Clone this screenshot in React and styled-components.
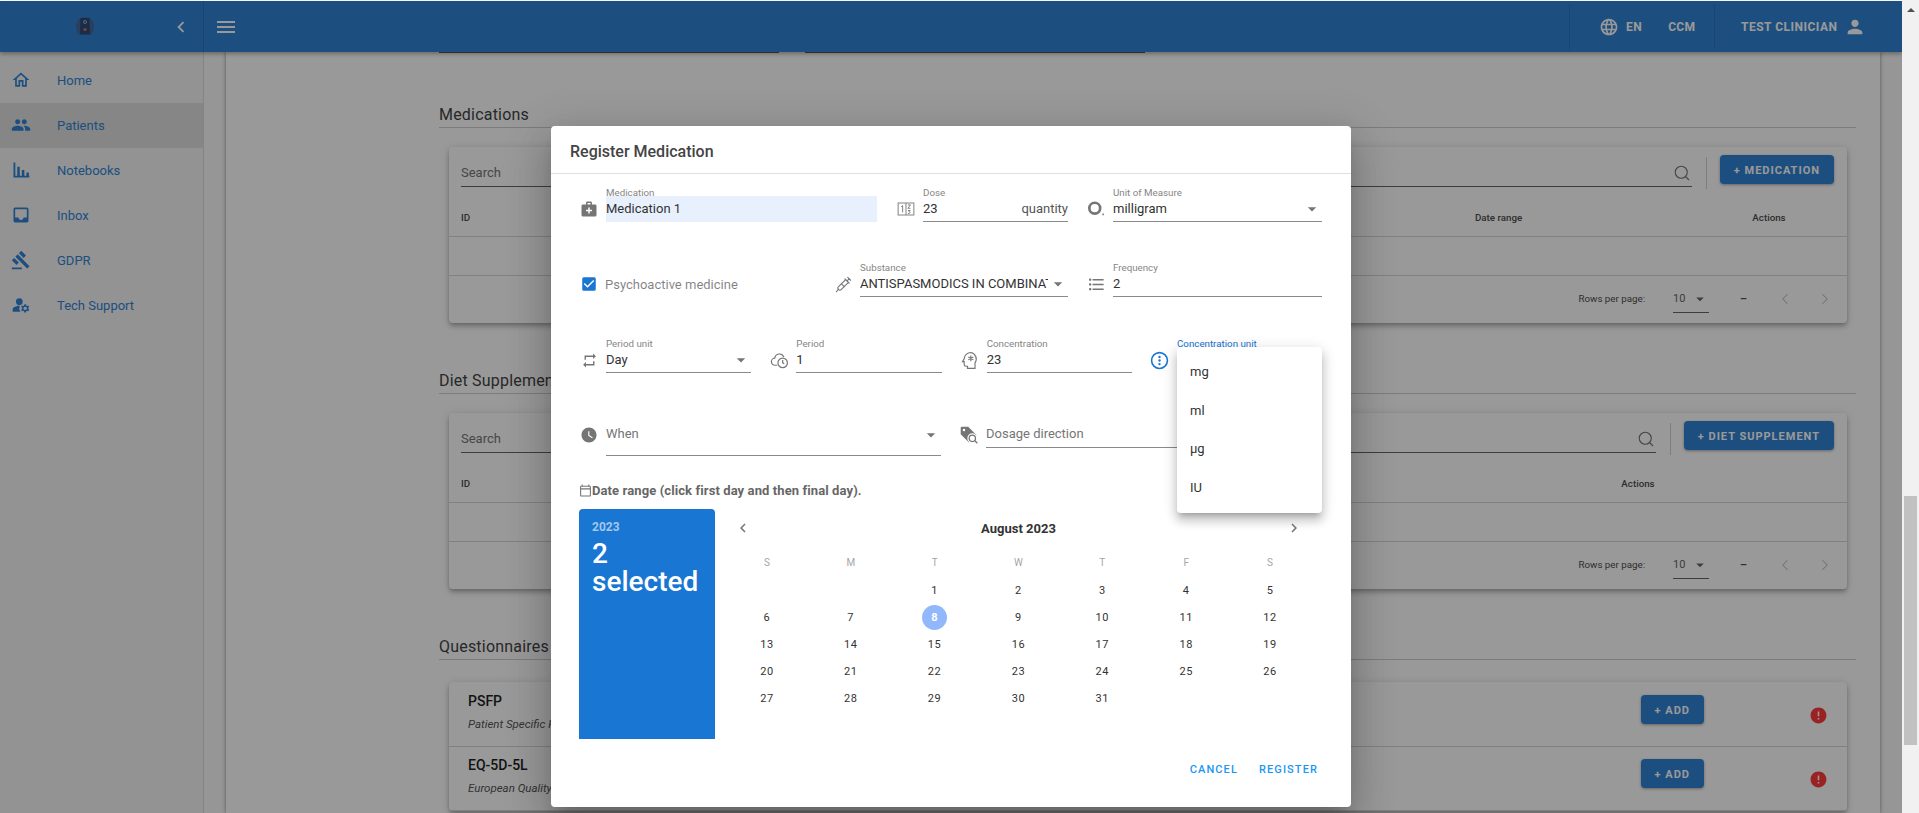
import React from 'react';
import styled, { createGlobalStyle } from 'styled-components';
import {
    MdOutlineHome, MdPeople, MdInbox, MdGavel, MdManageAccounts, MdMenu, MdChevronLeft, MdChevronRight,
    MdLanguage, MdPerson, MdMedicalServices, MdFormatListBulleted, MdRepeat, MdWatchLater,
    MdArrowDropDown, MdOutlineCalendarToday, MdError, MdCheckBox,
} from 'react-icons/md';
import { Search as SearchIcon, Syringe, ChevronLeft, ChevronRight } from 'lucide-react';

const GlobalStyle = createGlobalStyle`
    html, body {
        margin: 0;
        height: 100%;
        overflow: hidden;
        background: #ffffff;
        font-family: Roboto, sans-serif;
    }
`;

const Root = styled.div`
    display: flex;
    width: 1919px;
    height: 813px;
`;

const Stage = styled.div`
    position: relative;
    width: 1902px;
    height: 813px;
    padding-top: 1px;
    box-sizing: border-box;
    overflow: hidden;
    background: #ffffff;
    display: flex;
    flex-direction: column;
`;

const ScrollTrack = styled.div`
    width: 17px;
    background: #f1f1f1;
    display: flex;
    flex-direction: column;
    align-items: center;
`;

const ScrollArrow = styled.div`
    margin-top: 8px;
    border-left: 4px solid transparent;
    border-right: 4px solid transparent;
    border-bottom: 4px solid #505050;
`;

const ScrollThumb = styled.div`
    margin-top: 484px;
    width: 13px;
    height: 249px;
    background: #c1c1c1;
`;

const AppBar = styled.header`
    position: relative;
    z-index: 2;
    flex: none;
    height: 51px;
    display: flex;
    align-items: center;
    background: #3084d6;
    color: #ffffff;
    box-shadow: 0 2px 4px rgba(0, 0, 0, 0.3);
`;

const Brand = styled.div`
    width: 204px;
    height: 51px;
    box-sizing: border-box;
    border-right: 1px solid rgba(0, 0, 0, 0.12);
    display: flex;
    align-items: center;
    padding-left: 76px;
    flex: none;
`;

const CollapseBtn = styled.span`
    display: flex;
    margin-left: 76px;
`;

const MenuBtn = styled.span`
    display: flex;
    margin-left: 10px;
`;

const BarRight = styled.div`
    margin-left: auto;
    display: flex;
    align-items: center;
    font-size: 12px;
    font-weight: 700;
    letter-spacing: 0.5px;
`;

const LocaleBlock = styled.div`
    width: 146px;
    height: 46px;
    box-sizing: border-box;
    border-left: 1px solid rgba(0, 0, 0, 0.1);
    border-right: 1px solid rgba(0, 0, 0, 0.1);
    display: flex;
    align-items: center;
    padding-left: 29px;
    gap: 7px;
`;

const CcmLabel = styled.span`
    margin-left: 19px;
    letter-spacing: 0.3px;
`;

const UserBlock = styled.div`
    width: 187px;
    box-sizing: border-box;
    display: flex;
    align-items: center;
    padding-left: 26px;
    gap: 6px;
`;

const Body = styled.div`
    flex: 1;
    display: flex;
    min-height: 0;
`;

const Sidebar = styled.nav`
    flex: none;
    width: 204px;
    box-sizing: border-box;
    padding-top: 6px;
    background: #f5f5f5;
    border-right: 1px solid #dcdcdc;
`;

const NavItem = styled.div`
    height: 45px;
    box-sizing: border-box;
    padding: 0 0 1px 11px;
    display: flex;
    align-items: center;
    gap: 26px;
    font-size: 13px;
    color: #3084d6;
    background: ${(p) => (p.$active ? '#dfdfdf' : 'transparent')};
`;

const Main = styled.main`
    flex: 1;
    min-width: 0;
    padding-left: 22px;
    background: #fafafa;
    overflow: hidden;
`;

const Sheet = styled.div`
    width: 1654px;
    min-height: 100%;
    box-sizing: border-box;
    padding: 0 24px 0 213px;
    background: #ffffff;
    box-shadow: 0 0 4px rgba(0, 0, 0, 0.45);
`;

const StubRow = styled.div`
    display: flex;
    gap: 26px;
    height: 1px;
    margin-bottom: 50px;
`;

const Stub = styled.div`
    width: 340px;
    background: rgba(0, 0, 0, 0.6);
`;

const SectionTitle = styled.h2`
    margin: ${(p) => p.$top || 0}px 0 0;
    height: 24px;
    line-height: 24px;
    font-size: 16px;
    font-weight: 400;
    letter-spacing: 0.2px;
    color: #444444;
    border-bottom: 1px solid #cfcfcf;
`;

const Card = styled.section`
    margin: ${(p) => p.$top}px 9px 0 10px;
    border-radius: 4px;
    background: #ffffff;
    box-shadow: 0 2px 4px -1px rgba(0, 0, 0, 0.2), 0 4px 5px rgba(0, 0, 0, 0.14), 0 1px 10px rgba(0, 0, 0, 0.12);
`;

const Toolbar = styled.div`
    height: 51px;
    box-sizing: border-box;
    display: flex;
    align-items: flex-start;
    padding: 8px 13px 0 12px;
`;

const SearchField = styled.div`
    flex: 1;
    height: 32px;
    box-sizing: border-box;
    display: flex;
    align-items: center;
    justify-content: space-between;
    padding: 4px 1px 0 0;
    font-size: 13px;
    color: #767676;
    border-bottom: 1px solid #666666;
`;

const ToolbarDivider = styled.div`
    width: 1px;
    height: 32px;
    margin: 2px 13px 0 14px;
    background: #d0d0d0;
`;

const PrimaryButton = styled.button`
    flex: none;
    height: 29px;
    padding: 1px 14px 0;
    border: 0;
    border-radius: 4px;
    background: #3084d6;
    color: #ffffff;
    font-family: inherit;
    font-size: 11px;
    font-weight: 700;
    letter-spacing: 1px;
    box-shadow: 0 1px 3px rgba(0, 0, 0, 0.35);
`;

const HeadRow = styled.div`
    display: grid;
    grid-template-columns: ${(p) => p.$cols};
    align-items: center;
    height: 39px;
    box-sizing: border-box;
    padding-left: 12px;
    border-bottom: 1px solid #d8d8d8;
    font-size: 9.75px;
    font-weight: 500;
    color: #4d4d4d;
`;

const HeadCell = styled.span`
    text-align: ${(p) => (p.$center ? 'center' : 'left')};
`;

const EmptyRow = styled.div`
    height: 39px;
    box-sizing: border-box;
    border-bottom: 1px solid #d8d8d8;
`;

const Pagination = styled.div`
    height: 47px;
    box-sizing: border-box;
    display: flex;
    justify-content: flex-end;
    align-items: flex-start;
    padding: 14px 13px 0 0;
    font-size: 9.75px;
    line-height: 17px;
    color: #4d4d4d;
`;

const PageSelect = styled.div`
    width: 36px;
    height: 23px;
    box-sizing: border-box;
    margin: 0 31px 0 28px;
    display: flex;
    justify-content: space-between;
    font-size: 11px;
    color: #666666;
    border-bottom: 1px solid #666666;
`;

const PageDash = styled.span`
    width: 6px;
    margin-right: 30px;
    font-size: 11px;
    font-weight: 700;
`;

const PageNav = styled.div`
    display: flex;
    gap: 22px;
    color: #bdbdbd;
`;

const QuestionRow = styled.div`
    height: ${(p) => p.$h}px;
    box-sizing: border-box;
    display: flex;
    align-items: flex-start;
    padding: ${(p) => p.$top}px 19px 0 19px;
    border-bottom: 1px solid #d8d8d8;
`;

const QuestionText = styled.div`
    flex: 1;
`;

const QuestionName = styled.div`
    font-size: 14px;
    line-height: 18px;
    font-weight: 500;
    color: #1f1f1f;
`;

const QuestionNote = styled.div`
    margin-top: 6px;
    font-size: 11.5px;
    line-height: 16px;
    font-style: italic;
    color: #555555;
`;

const AddButton = styled(PrimaryButton)`
    margin-top: 3px;
`;

const AlertMark = styled.span`
    display: flex;
    margin: 14px 0 0 105px;
    color: #ff3b3b;
`;

const Scrim = styled.div`
    position: absolute;
    z-index: 5;
    inset: 1px 0 0 0;
    display: flex;
    justify-content: center;
    align-items: flex-start;
    padding-top: 125px;
    background: rgba(0, 0, 0, 0.4);
`;

const Dialog = styled.div`
    width: 800px;
    height: 681px;
    display: flex;
    flex-direction: column;
    border-radius: 4px;
    background: #ffffff;
    color: #333333;
    box-shadow: 0 11px 15px -7px rgba(0, 0, 0, 0.2), 0 24px 38px 3px rgba(0, 0, 0, 0.14), 0 9px 46px 8px rgba(0, 0, 0, 0.12);
`;

const DialogTitle = styled.h2`
    flex: none;
    margin: 0;
    height: 48px;
    box-sizing: border-box;
    padding: 16px 0 0 19px;
    font-size: 16px;
    line-height: 20px;
    font-weight: 500;
    color: #444444;
    border-bottom: 1px solid #e0e0e0;
`;

const DialogBody = styled.div`
    flex: 1;
    padding: 13px 29px 0 28px;
`;

const FormRow = styled.div`
    display: flex;
    align-items: flex-start;
    gap: 18px;
    margin-bottom: ${(p) => p.$mb}px;
`;

const FieldWrap = styled.div`
    position: relative;
    display: flex;
    flex: none;
`;

const FieldIcon = styled.div`
    flex: none;
    width: 20px;
    height: 20px;
    margin: 12px 7px 0 0;
    display: flex;
    align-items: center;
    justify-content: center;
    color: ${(p) => (p.$focus ? '#1976d2' : '#757575')};
`;

const FieldBox = styled.div`
    width: ${(p) => p.$w}px;
`;

const FieldLabel = styled.div`
    height: 12px;
    font-size: 9.75px;
    line-height: 12px;
    color: ${(p) => (p.$focus ? '#1976d2' : '#858585')};
`;

const FieldControl = styled.div`
    display: flex;
    align-items: flex-start;
    box-sizing: border-box;
    height: ${(p) => (p.$filled ? 26 : p.$h || 23)}px;
    margin-top: ${(p) => (p.$filled ? -3 : 0)}px;
    margin-right: ${(p) => (p.$filled ? 1 : 0)}px;
    padding-top: ${(p) => (p.$filled ? 3 : 0)}px;
    line-height: ${(p) => (p.$muted ? 18 : 20)}px;
    font-size: 13px;
    color: ${(p) => (p.$muted ? '#757575' : '#333333')};
    background: ${(p) => (p.$filled ? '#e8f0fe' : 'transparent')};
    border-bottom: ${(p) => (p.$filled ? '0' : '1px solid #8a8a8a')};
`;

const FieldValue = styled.span`
    flex: 1;
    min-width: 0;
    padding-right: 4px;
    white-space: nowrap;
    overflow: hidden;
`;

const FieldSuffix = styled.span`
    color: #555555;
`;

const DropArrow = styled.span`
    flex: none;
    display: flex;
    color: #757575;
`;

const CheckCell = styled.div`
    flex: none;
    width: 236px;
    height: 35px;
    box-sizing: border-box;
    padding: 9px 0 0 1px;
    display: flex;
    align-items: center;
    gap: 7px;
    font-size: 13px;
    color: rgba(0, 0, 0, 0.5);
`;

const CheckMark = styled.span`
    display: flex;
    color: #1976d2;
`;

const OptionMenu = styled.ul`
    position: absolute;
    z-index: 3;
    top: 9px;
    left: 27px;
    width: 145px;
    height: 166px;
    box-sizing: border-box;
    margin: 0;
    padding: 6px 0;
    list-style: none;
    border-radius: 4px;
    background: #ffffff;
    box-shadow: 0 5px 5px -3px rgba(0, 0, 0, 0.2), 0 8px 10px 1px rgba(0, 0, 0, 0.14), 0 3px 14px 2px rgba(0, 0, 0, 0.12);
`;

const OptionItem = styled.li`
    height: 38.5px;
    line-height: 38.5px;
    padding-left: 13px;
    font-size: 13px;
    color: #333333;
`;

const DateCaption = styled.div`
    display: flex;
    align-items: center;
    margin: 26px 0 11px;
    height: 16px;
    font-size: 13px;
    font-weight: 700;
    letter-spacing: 0.1px;
    color: #666666;
`;

const DateCalendarIcon = styled.span`
    display: flex;
    color: #757575;
`;

const Calendar = styled.div`
    display: flex;
    height: 230px;
`;

const CalendarSide = styled.div`
    flex: none;
    width: 136px;
    box-sizing: border-box;
    padding: 10px 13px;
    border-radius: 4px 4px 0 0;
    background: #1976d2;
    color: #ffffff;
`;

const SideYear = styled.div`
    font-size: 12px;
    line-height: 16px;
    font-weight: 700;
    color: rgba(255, 255, 255, 0.6);
`;

const SideCount = styled.div`
    margin-top: 5px;
    font-size: 28px;
    line-height: 28px;
    font-weight: 500;
`;

const CalendarMain = styled.div`
    flex: 1;
    padding: 0 10px;
`;

const MonthBar = styled.div`
    height: 38px;
    padding: 0 9px;
    display: flex;
    align-items: center;
    justify-content: space-between;
    font-size: 13px;
    font-weight: 700;
    color: #333333;
`;

const MonthNav = styled.span`
    display: flex;
    color: #757575;
`;

const WeekRow = styled.div`
    display: grid;
    grid-template-columns: repeat(7, 1fr);
    height: 20px;
    margin-top: 5px;
    align-items: center;
    text-align: center;
    font-size: 10px;
    color: #a5a5a5;
`;

const DayGrid = styled.div`
    display: grid;
    grid-template-columns: repeat(7, 1fr);
    grid-auto-rows: 26.9px;
    margin-top: 5px;
    justify-items: center;
    align-items: center;
    font-size: 11px;
    letter-spacing: 0.6px;
    color: #333333;
`;

const Day = styled.span`
    grid-column-start: ${(p) => p.$start || 'auto'};
    width: 25px;
    height: 25px;
    line-height: 25px;
    text-align: center;
    border-radius: 50%;
    background: ${(p) => (p.$selected ? '#90b8fb' : 'transparent')};
    color: ${(p) => (p.$selected ? '#ffffff' : 'inherit')};
    font-weight: ${(p) => (p.$selected ? 700 : 400)};
`;

const DialogActions = styled.div`
    flex: none;
    height: 68px;
    box-sizing: border-box;
    padding: 23px 33px 0 0;
    display: flex;
    justify-content: flex-end;
    gap: 21px;
`;

const TextButton = styled.button`
    height: 16px;
    padding: 0;
    border: 0;
    background: none;
    font-family: inherit;
    font-size: 11px;
    line-height: 16px;
    font-weight: 500;
    letter-spacing: 1.1px;
    color: #2196f3;
`;

const LogoIcon = () => (
    <svg width="18" height="19" viewBox="0 0 18 19">
        <path d="M4 1c3-1 7-1 10 0 3 2 4 6 4 9 0 4-2 7-4 8-1-1-3-1-5-1s-4 0-5 1c-2-1-4-4-4-8 0-3 1-7 4-9z" fill="#47699a" />
        <path d="M4.500 1h9l.5 16.500H4z" fill="#2b4a78" />
        <circle cx="9" cy="5" r="1.500" fill="none" stroke="#b9c6d8" strokeWidth="0.8" />
        <circle cx="9" cy="12.500" r="1.600" fill="#f06060" />
    </svg>
);

const BarsIcon = () => (
    <svg width="20" height="20" viewBox="0 0 24 24" fill="currentColor">
        <path d="M3 3h2.200v18H3zM3 19h19v2H3zM7.500 8h3v11h-3zM13 12h3v7h-3zM18.500 15h3v4h-3z" />
    </svg>
);

const DoseIcon = () => (
    <svg width="18" height="18" viewBox="0 0 24 24" fill="none" stroke="currentColor" strokeWidth="1.2">
        <rect x="1.500" y="4" width="21" height="16" />
        <path d="M12 4v16M5.500 9l2-1.500v9M14.500 6.500h3.500l-3.500 4.500h3.500M14.500 14h3l-1.500 1.500c2 0 2 3-1.500 2.500" />
    </svg>
);

const UnitIcon = () => (
    <svg width="20" height="20" viewBox="0 0 24 24" fill="none" stroke="currentColor">
        <circle cx="10.500" cy="11" r="6.500" strokeWidth="3.200" />
        <path d="M21 17.500l-.8 2" strokeWidth="1.600" />
    </svg>
);

const PeriodIcon = () => (
    <svg width="19" height="19" viewBox="0 0 24 24" fill="none" stroke="currentColor" strokeWidth="1.500">
        <path d="M9 18H6.500a4.500 4.500 0 0 1-.5-9 6 6 0 0 1 11.500-1.500" />
        <circle cx="16" cy="15" r="6" />
        <path d="M16 11.500V15l2 1.200" />
    </svg>
);

const HeadIcon = () => (
    <svg width="20" height="20" viewBox="0 0 24 24" fill="none" stroke="currentColor" strokeWidth="1.400">
        <path d="M13 3a8 8 0 0 0-8 7.500L3 14h2v3.500a2 2 0 0 0 2 2h2V22h9v-6.500A8 8 0 0 0 13 3z" />
        <path d="M13 6.500v7M10 8.300l6 3.400M10 11.700l6-3.400" />
    </svg>
);

const InfoDotsIcon = () => (
    <svg width="19" height="19" viewBox="0 0 24 24" fill="none">
        <circle cx="12" cy="12" r="10" stroke="currentColor" strokeWidth="2" />
        <circle cx="12" cy="7.500" r="1.500" fill="currentColor" />
        <circle cx="12" cy="12" r="1.500" fill="currentColor" />
        <circle cx="12" cy="16.500" r="1.500" fill="currentColor" />
    </svg>
);

const TagSearchIcon = () => (
    <svg width="20" height="20" viewBox="0 0 24 24">
        <path d="M2 3.500A1.500 1.500 0 0 1 3.500 2H11l10 10-9 9L2 11z" fill="currentColor" />
        <circle cx="6" cy="6" r="1.500" fill="#ffffff" />
        <circle cx="16" cy="16" r="5" fill="#ffffff" stroke="#ffffff" strokeWidth="2" />
        <circle cx="16" cy="16" r="3.800" fill="none" stroke="currentColor" strokeWidth="1.500" />
        <path d="M19 19l3 3" stroke="currentColor" strokeWidth="1.600" />
    </svg>
);

const navItems = [
    { label: 'Home', icon: <MdOutlineHome size={20} /> },
    { label: 'Patients', icon: <MdPeople size={20} />, active: true },
    { label: 'Notebooks', icon: <BarsIcon /> },
    { label: 'Inbox', icon: <MdInbox size={20} /> },
    { label: 'GDPR', icon: <MdGavel size={20} /> },
    { label: 'Tech Support', icon: <MdManageAccounts size={20} /> },
];

const weekDays = ['S', 'M', 'T', 'W', 'T', 'F', 'S'];
const monthDays = Array.from({ length: 31 }, (_, i) => i + 1);
const unitOptions = ['mg', 'ml', 'µg', 'IU'];

function Field({ icon, label, value, width, suffix, filled, muted, select, focus, height, children }) {
    return (
        <FieldWrap>
            <FieldIcon $focus={focus}>{icon}</FieldIcon>
            <FieldBox $w={width}>
                <FieldLabel $focus={focus}>{label}</FieldLabel>
                <FieldControl $filled={filled} $muted={muted} $h={height}>
                    <FieldValue>{value}</FieldValue>
                    {suffix && <FieldSuffix>{suffix}</FieldSuffix>}
                    {select && <DropArrow><MdArrowDropDown size={20} /></DropArrow>}
                </FieldControl>
            </FieldBox>
            {children}
        </FieldWrap>
    );
}

function TableCard({ top, action, cols, headers }) {
    return (
        <Card $top={top}>
            <Toolbar>
                <SearchField>
                    Search
                    <SearchIcon size={18} strokeWidth={1.5} />
                </SearchField>
                <ToolbarDivider />
                <PrimaryButton>{action}</PrimaryButton>
            </Toolbar>
            <HeadRow $cols={cols}>
                {headers.map((h) => (
                    <HeadCell key={h} $center={h === 'Actions'}>{h}</HeadCell>
                ))}
            </HeadRow>
            <EmptyRow />
            <Pagination>
                <span>Rows per page:</span>
                <PageSelect>
                    10
                    <MdArrowDropDown size={18} />
                </PageSelect>
                <PageDash>–</PageDash>
                <PageNav>
                    <ChevronLeft size={18} strokeWidth={1.4} />
                    <ChevronRight size={18} strokeWidth={1.4} />
                </PageNav>
            </Pagination>
        </Card>
    );
}

export default function App() {
    return (
        <Root>
            <GlobalStyle />
            <Stage>
                <AppBar>
                    <Brand>
                        <LogoIcon />
                        <CollapseBtn><MdChevronLeft size={22} /></CollapseBtn>
                    </Brand>
                    <MenuBtn><MdMenu size={24} /></MenuBtn>
                    <BarRight>
                        <LocaleBlock>
                            <MdLanguage size={20} />
                            <span>EN</span>
                            <CcmLabel>CCM</CcmLabel>
                        </LocaleBlock>
                        <UserBlock>
                            <span>TEST CLINICIAN</span>
                            <MdPerson size={22} />
                        </UserBlock>
                    </BarRight>
                </AppBar>
                <Body>
                    <Sidebar>
                        {navItems.map((item) => (
                            <NavItem key={item.label} $active={item.active}>
                                {item.icon}
                                {item.label}
                            </NavItem>
                        ))}
                    </Sidebar>
                    <Main>
                        <Sheet>
                            <StubRow>
                                <Stub />
                                <Stub />
                            </StubRow>
                            <SectionTitle>Medications</SectionTitle>
                            <TableCard
                                top={19}
                                action="+ MEDICATION"
                                cols="838px 176px 240px 108px"
                                headers={['ID', 'Substance', 'Date range', 'Actions']}
                            />
                            <SectionTitle $top={46}>Diet Supplements</SectionTitle>
                            <TableCard
                                top={19}
                                action="+ DIET SUPPLEMENT"
                                cols="1123px 108px"
                                headers={['ID', 'Actions']}
                            />
                            <SectionTitle $top={46}>Questionnaires</SectionTitle>
                            <Card $top={22}>
                                <QuestionRow $h={65} $top={10}>
                                    <QuestionText>
                                        <QuestionName>PSFP</QuestionName>
                                        <QuestionNote>Patient Specific Functional Scale</QuestionNote>
                                    </QuestionText>
                                    <AddButton>+ ADD</AddButton>
                                    <AlertMark><MdError size={19} /></AlertMark>
                                </QuestionRow>
                                <QuestionRow $h={64} $top={9}>
                                    <QuestionText>
                                        <QuestionName>EQ-5D-5L</QuestionName>
                                        <QuestionNote>European Quality of Life</QuestionNote>
                                    </QuestionText>
                                    <AddButton>+ ADD</AddButton>
                                    <AlertMark><MdError size={19} /></AlertMark>
                                </QuestionRow>
                            </Card>
                        </Sheet>
                    </Main>
                </Body>
                <Scrim>
                    <Dialog>
                        <DialogTitle>Register Medication</DialogTitle>
                        <DialogBody>
                            <FormRow $mb={40}>
                                <Field icon={<MdMedicalServices size={18} />} label="Medication" value="Medication 1" width={272} filled />
                                <Field icon={<DoseIcon />} label="Dose" value="23" suffix="quantity" width={145} />
                                <Field icon={<UnitIcon />} label="Unit of Measure" value="milligram" width={209} select />
                            </FormRow>
                            <FormRow $mb={41}>
                                <CheckCell>
                                    <CheckMark><MdCheckBox size={18} /></CheckMark>
                                    Psychoactive medicine
                                </CheckCell>
                                <Field
                                    icon={<Syringe size={17} strokeWidth={1.6} />}
                                    label="Substance"
                                    value="ANTISPASMODICS IN COMBINATION WITH PSYCHOLEPTICS"
                                    width={208}
                                    select
                                />
                                <Field icon={<MdFormatListBulleted size={19} />} label="Frequency" value="2" width={209} />
                            </FormRow>
                            <FormRow $mb={40}>
                                <Field icon={<MdRepeat size={17} />} label="Period unit" value="Day" width={145.33} select />
                                <Field icon={<PeriodIcon />} label="Period" value="1" width={145.33} />
                                <Field icon={<HeadIcon />} label="Concentration" value="23" width={145.33} />
                                <Field icon={<InfoDotsIcon />} label="Concentration unit" width={145} focus>
                                    <OptionMenu>
                                        {unitOptions.map((unit) => (
                                            <OptionItem key={unit}>{unit}</OptionItem>
                                        ))}
                                    </OptionMenu>
                                </Field>
                            </FormRow>
                            <FormRow $mb={0}>
                                <Field icon={<MdWatchLater size={18} />} value="When" width={335} height={31} muted select />
                                <Field icon={<TagSearchIcon />} value="Dosage direction" width={336} muted />
                            </FormRow>
                            <DateCaption>
                                <DateCalendarIcon><MdOutlineCalendarToday size={13} /></DateCalendarIcon>
                                Date range (click first day and then final day).
                            </DateCaption>
                            <Calendar>
                                <CalendarSide>
                                    <SideYear>2023</SideYear>
                                    <SideCount>2<br />selected</SideCount>
                                </CalendarSide>
                                <CalendarMain>
                                    <MonthBar>
                                        <MonthNav><MdChevronLeft size={18} /></MonthNav>
                                        August 2023
                                        <MonthNav><MdChevronRight size={18} /></MonthNav>
                                    </MonthBar>
                                    <WeekRow>
                                        {weekDays.map((d, i) => <span key={i}>{d}</span>)}
                                    </WeekRow>
                                    <DayGrid>
                                        {monthDays.map((d) => (
                                            <Day key={d} $start={d === 1 ? 3 : undefined} $selected={d === 8}>{d}</Day>
                                        ))}
                                    </DayGrid>
                                </CalendarMain>
                            </Calendar>
                        </DialogBody>
                        <DialogActions>
                            <TextButton>CANCEL</TextButton>
                            <TextButton>REGISTER</TextButton>
                        </DialogActions>
                    </Dialog>
                </Scrim>
            </Stage>
            <ScrollTrack>
                <ScrollArrow />
                <ScrollThumb />
            </ScrollTrack>
        </Root>
    );
}
